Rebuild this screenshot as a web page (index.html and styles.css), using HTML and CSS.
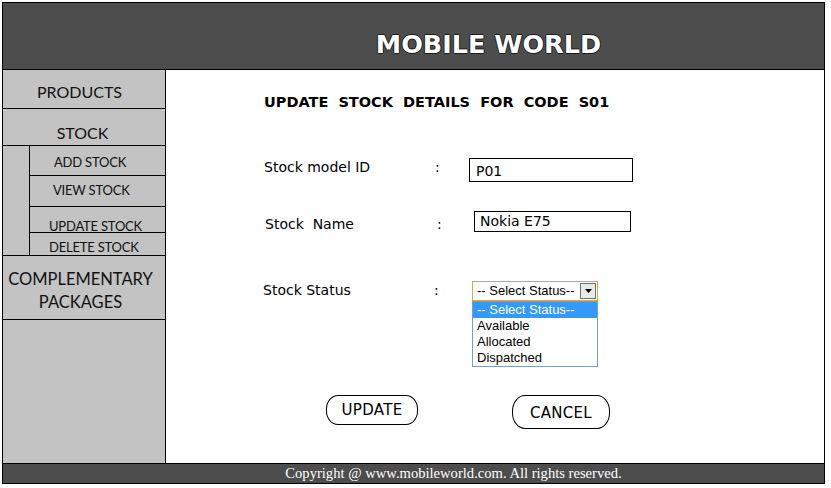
FILE: index.html
```html
<!DOCTYPE html>
<html>
<head>
<meta charset="utf-8">
<title>Mobile World - Update Stock</title>
<link rel="stylesheet" href="styles.css">
</head>
<body>
<div class="frame">
  <header class="header">
    <h1 class="brand">MOBILE WORLD</h1>
  </header>
  <div class="main">
    <nav class="sidebar">
      <div class="nav-item nav-products">PRODUCTS</div>
      <div class="nav-item nav-stock">STOCK</div>
      <div class="sub-block">
        <div class="sub-gutter"></div>
        <div class="sub-list">
          <div class="sub-item sub-add">ADD STOCK</div>
          <div class="sub-item sub-view">VIEW STOCK</div>
          <div class="sub-item sub-update">UPDATE STOCK</div>
          <div class="sub-item sub-delete">DELETE STOCK</div>
        </div>
      </div>
      <div class="nav-item nav-comp">COMPLEMENTARY<br>PACKAGES</div>
    </nav>
    <section class="content">
      <h2 class="page-title">UPDATE&nbsp; STOCK&nbsp; DETAILS&nbsp; FOR&nbsp; CODE&nbsp; S01</h2>
      <div class="form-row row-id">
        <span class="label">Stock model ID</span>
        <span class="colon">:</span>
        <div class="field field-id">P01</div>
      </div>
      <div class="form-row row-name">
        <span class="label">Stock&nbsp; Name</span>
        <span class="colon">:</span>
        <div class="field field-name">Nokia E75</div>
      </div>
      <div class="form-row row-status">
        <span class="label">Stock Status</span>
        <span class="colon">:</span>
        <div class="select">
          <div class="select-box">
            <span class="select-value">-- Select Status--</span>
            <span class="select-btn"><svg width="7" height="4" viewBox="0 0 7 4"><path d="M0 0h7L3.5 4z" fill="#000"/></svg></span>
          </div>
          <ul class="select-list">
            <li class="opt opt-active">-- Select Status--</li>
            <li class="opt">Available</li>
            <li class="opt">Allocated</li>
            <li class="opt">Dispatched</li>
          </ul>
        </div>
      </div>
      <div class="actions">
        <div class="btn btn-update">UPDATE</div>
        <div class="btn btn-cancel">CANCEL</div>
      </div>
    </section>
  </div>
  <footer class="footer">Copyright @ www.mobileworld.com. All rights reserved.</footer>
</div>
</body>
</html>
```
FILE: styles.css
```css
* { box-sizing: border-box; }
html, body { margin: 0; padding: 0; background: #fff; }

.frame {
  width: 823px;
  height: 482px;
  margin: 2px 0 0 2px;
  border: 1px solid #000;
  display: flex;
  flex-direction: column;
}

.header {
  height: 67px;
  flex: none;
  background: #4d4d4d;
  border-bottom: 1px solid #000;
  display: flex;
  justify-content: center;
  align-items: flex-start;
  padding: 26px 0 0 150px;
}
.brand {
  margin: 0;
  font-family: "DejaVu Sans", sans-serif;
  font-weight: bold;
  font-size: 25.5px;
  line-height: 30px;
  color: #fff;
  letter-spacing: 0;
  text-shadow: -1px 0 #1a1a1a, 1px 0 #1a1a1a, 0 -1px #1a1a1a, 0 1px #1a1a1a;
}

.main { flex: 1; display: flex; min-height: 0; }

.sidebar {
  width: 163px;
  flex: none;
  background: #c3c3c3;
  border-right: 1px solid #000;
  font-family: Lato, "Open Sans", sans-serif;
  color: #111;
}
.nav-item {
  display: flex;
  justify-content: center;
  align-items: center;
  font-size: 16px;
  border-bottom: 1px solid #000;
  text-align: center;
}
.nav-products { height: 39px; padding: 4px 9px 0 0; }
.nav-stock { height: 37px; padding: 10px 3px 0 0; }
.nav-comp { height: 64px; line-height: 23px; padding: 6px 7px 0 0; font-size: 16.5px; }

.sub-block { display: flex; height: 110px; border-bottom: 1px solid #000; }
.sub-gutter { width: 27px; border-right: 1px solid #000; }
.sub-list { flex: 1; display: flex; flex-direction: column; }
.sub-item {
  font-size: 13px;
  display: flex;
  align-items: center;
  border-bottom: 1px solid #000;
  letter-spacing: -0.2px;
}
.sub-add { height: 30px; padding: 2px 0 0 24px; }
.sub-view { height: 31px; padding: 0 0 3px 23px; }
.sub-update { height: 26px; padding: 12px 0 0 19px; }
.sub-delete { height: 22px; padding: 6px 0 0 19px; border-bottom: none; }

.content {
  flex: 1;
  background: #fff;
  padding: 23px 0 0 98px;
  font-family: "DejaVu Sans", sans-serif;
  color: #000;
}
.page-title {
  margin: 0;
  font-size: 14.5px;
  line-height: 18px;
  font-weight: bold;
  letter-spacing: 0;
}

.form-row { display: flex; align-items: flex-start; font-size: 14px; }
.label { line-height: 18px; }
.colon { line-height: 18px; }
.row-id { margin-top: 47px; }
.row-id .label { width: 171px; }
.row-id .colon { width: 34px; }
.row-name { margin-top: 29px; }
.row-name .label { width: 172px; margin-left: 1px; margin-top: 4px; }
.row-name .colon { width: 37px; margin-top: 4px; }
.row-status { margin-top: 48px; }
.row-status .label { width: 171px; margin-left: -1px; }
.row-status .colon { width: 38px; }

.field {
  border: 1px solid #000;
  background: #fff;
  font-size: 14px;
  display: flex;
  align-items: center;
}
.field-id { width: 164px; height: 24px; padding: 1px 0 0 6px; }
.field-name { width: 157px; height: 21px; padding: 0 0 1px 5px; }

.select { position: relative; width: 126px; font-family: "Liberation Sans", Arial, sans-serif; font-size: 13px; }
.select-box {
  height: 20px;
  border: 1px solid #d9a54e;
  background: #fff;
  display: flex;
  align-items: center;
  padding-left: 4px;
}
.select-value { flex: 1; line-height: 16px; }
.select-btn {
  width: 16px;
  height: 16px;
  margin-right: 1px;
  background: #e9e9e9;
  border: 1px solid #707070;
  display: flex;
  align-items: center;
  justify-content: center;
}
.select-list {
  position: absolute;
  left: 0;
  top: 20px;
  width: 126px;
  margin: 0;
  padding: 0;
  list-style: none;
  border: 1px solid #7f9db9;
  background: #fff;
}
.opt { height: 16px; line-height: 16px; padding-left: 4px; color: #000; }
.opt-active { background: #3399ff; color: #fff; }

.actions {
  display: flex;
  align-items: flex-start;
  gap: 94px;
  margin-top: 94px;
  padding-left: 62px;
}
.btn {
  border: 1px solid #000;
  background: #fff;
  font-size: 15px;
  display: flex;
  align-items: center;
  justify-content: center;
  letter-spacing: 0.3px;
}
.btn-update { width: 92px; height: 30px; border-radius: 12px / 14px; }
.btn-cancel { width: 98px; height: 34px; border-radius: 13px / 16px; padding-top: 2px; }

.footer {
  height: 20px;
  flex: none;
  background: #4d4d4d;
  border-top: 1px solid #000;
  color: #fff;
  font-family: "Liberation Serif", "Times New Roman", serif;
  font-size: 14.6px;
  line-height: 19px;
  text-align: center;
  padding-left: 80px;
}
```
